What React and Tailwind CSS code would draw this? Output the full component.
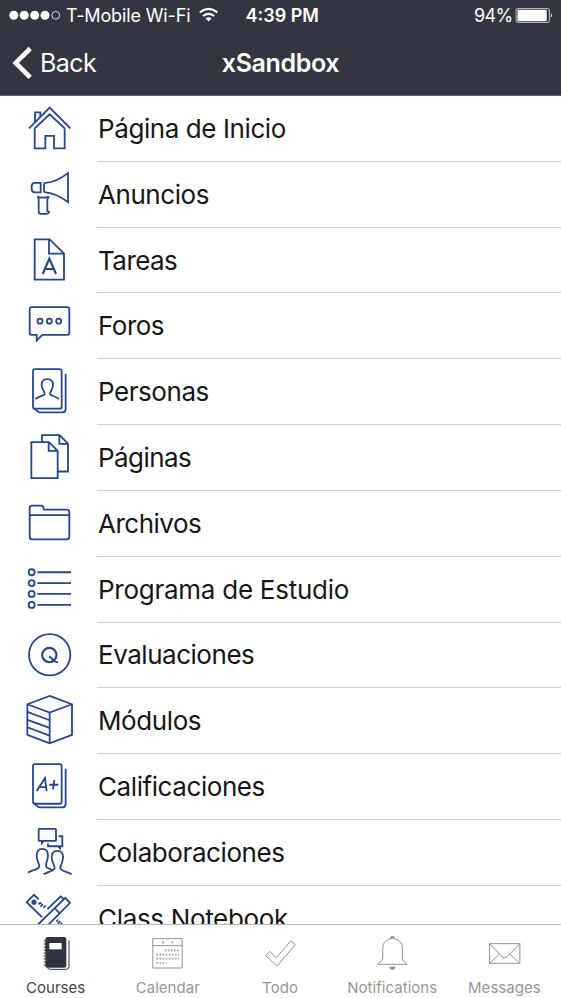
import React from "react";

const stroke = {
  fill: "none",
  stroke: "#25478f",
  strokeWidth: 5.4,
  strokeLinejoin: "miter",
};

const rows = [
  {
    label: "Página de Inicio",
    spacing: "tracking-[-0.41px]",
    box: "0 -0.9 291 197.5",
    icon: (
      <>
        <path d="M87 96 L149 34 L211 96" />
        <path d="M105 78 V48 H121 V61" />
        <path d="M104 96 L149 54 L194 96 V156 H162 V119 H136 V156 H104 Z" />
      </>
    ),
  },
  {
    label: "Anuncios",
    spacing: "tracking-[-0.45px]",
    box: "0 196.6 291 197.5",
    icon: (
      <>
        <path d="M122 259 V288 H105 Q95 288 95 278 V269 Q95 259 105 259 Z" />
        <path d="M132 263 Q132 259 137 259 C162 258 181 248 204 230 V317 C181 300 162 290 137 288 Q132 288 132 284 Z" />
        <path d="M112 300 C118 305 141 305 147 300 C144 304 142 307 142 312 V344 L147 346 Q146 352 138 352 H122 Q116 352 116 346 V309 Q116 303 112 300 Z" />
      </>
    ),
  },
  {
    label: "Tareas",
    spacing: "tracking-[-0.55px]",
    box: "0 -2 291 197.5",
    icon: (
      <>
        <path d="M104 32 H149 L192 75 V153 H104 Z M147 32 V75 H192" />
        <path d="M128 136 L148 90 L168 136 M134 121 H162" strokeWidth="6.5" />
      </>
    ),
  },
  {
    label: "Foros",
    spacing: "tracking-[-0.5px]",
    box: "0 195.5 291 197.5",
    icon: (
      <>
        <path d="M95 238 H202 Q208 238 208 244 V315 Q208 321 202 321 H127 L110 338 V321 H95 Q89 321 89 315 V244 Q89 238 95 238 Z" />
        <circle cx="120" cy="280" r="7.5" />
        <circle cx="148" cy="280" r="7.5" />
        <circle cx="176" cy="280" r="7.5" />
      </>
    ),
  },
  {
    label: "Personas",
    spacing: "tracking-[-0.45px]",
    box: "0 -3.1 291 197.5",
    icon: (
      <>
        <rect x="99" y="27" width="86" height="119" rx="6" />
        <path d="M102 145 L112 153 Q116 157 121 157 H187 Q197 157 197 147 V41" />
        <path d="M106 117 C114 109 127 109 134 103 C135 94 126 90 125 78 Q124 57 142 57 Q160 57 159 78 C158 90 149 94 150 103 C157 109 169 109 177 117" />
      </>
    ),
  },
  {
    label: "Páginas",
    spacing: "tracking-[-0.55px]",
    box: "0 194.4 291 197.5",
    icon: (
      <>
        <path d="M94 246 H147 L173 272 V354 H94 Z M146 246 V272 H173" />
        <path d="M126 246 V225 H179 L204 250 V334 H173 M178 225 V251 H204" />
      </>
    ),
  },
  {
    label: "Archivos",
    spacing: "tracking-[-0.5px]",
    box: "0 -4.1 291 197.5",
    icon: (
      <path d="M89 68 H208 M89 47 Q89 40 96 40 H123 Q130 40 131 48 L132 52 H201 Q208 52 208 60 V133 Q208 141 200 141 H97 Q89 141 89 133 Z" />
    ),
  },
  {
    label: "Programa de Estudio",
    spacing: "tracking-[-0.26px]",
    box: "0 193.3 291 197.5",
    icon: (
      <>
        <circle cx="95" cy="239" r="9" />
        <circle cx="95" cy="271.5" r="9" />
        <circle cx="95" cy="304" r="9" />
        <circle cx="95" cy="337" r="9" />
        <path d="M112 239 H213 M112 271.5 H213 M112 304 H213 M112 337 H213" />
      </>
    ),
  },
  {
    label: "Evaluaciones",
    spacing: "tracking-[-0.47px]",
    box: "0 -5.2 291 197.5",
    icon: (
      <>
        <circle cx="149" cy="90" r="62" />
        <circle cx="148" cy="91" r="21.5" strokeWidth="6.5" />
        <path d="M147 96 C157 95 158 115 174 112" strokeWidth="6" />
      </>
    ),
  },
  {
    label: "Módulos",
    spacing: "tracking-[-0.4px]",
    box: "0 192.2 291 197.5",
    icon: (
      <>
        <path d="M149 216 L216 241 V333 L149 358 L82 333 V241 Z M82 241 L149 266 L216 241 M149 266 V358" />
        <path d="M82 264 L149 289 M82 288 L149 312 M82 310 L149 335" />
      </>
    ),
  },
  {
    label: "Calificaciones",
    spacing: "tracking-[-0.42px]",
    box: "0 -6.3 291 197.5",
    icon: (
      <>
        <rect x="99" y="24" width="86" height="119" rx="6" />
        <path d="M102 142 L112 150 Q116 154 121 154 H187 Q197 154 197 144 V38" />
        <path d="M110 105 L135 66 L140 105 M118 93 H138 M148 86 H175 M163 72 L159 100" strokeWidth="5.5" />
      </>
    ),
  },
  {
    label: "Colaboraciones",
    spacing: "tracking-[-0.41px]",
    box: "0 191.2 291 197.5",
    icon: (
      <>
        <path d="M118 218 H166 Q168 218 168 220 V252 Q168 254 166 254 H131 L126 260 V254 H118 Q116 254 116 252 V220 Q116 218 118 218 Z" />
        <path d="M176 240 H187 V270 H180 V276 L174 270 H144 V262" />
        <path d="M84 349 C97 340 114 342 118 331 C118 320 109 313 110 298 Q111 278 127 278 Q144 278 144 298 C143 314 137 320 138 331 C142 338 151 337 158 342" />
        <path d="M131 354 C142 345 161 347 164 336 C164 325 155 317 155 302 Q156 284 172 284 Q189 284 189 302 C190 317 181 325 181 336 C185 347 203 345 215 354" />
      </>
    ),
  },
  {
    label: "Class Notebook",
    spacing: "tracking-[-0.33px]",
    box: "0 16.6 291 197.5",
    icon: (
      <>
        <path d="M126 110 L80 65 L102 43 L116 57" />
        <circle cx="102" cy="65" r="5" fill="#25478f" />
        <path d="M115 72 L120 66 M120 66 L124 70 M122 79 L128 71 M130 81 L137 76" />
        <path d="M142 86 L182 48 L190 55 M112 134 L196 52 L210 67 L144 134 M163 82 L178 97 M169 123 L174 117 M173 129 L181 122 M180 133 L186 127" />
      </>
    ),
  },
];

const tabs = [
  {
    label: "Courses",
    color: "text-[#434651]",
    icon: (
      <>
        <path d="M144 171 H192 Q199 171 199 178 V258 Q199 263 192 263 H142 Q136 263 136 257 V178 Q136 171 144 171 Z" fill="#2f3440" stroke="none" />
        <path d="M131 183 H140 M131 192 H140 M131 201 H140 M131 210 H140 M131 219 H140 M131 228 H140 M131 237 H140 M131 246 H140 M131 255 H140" stroke="#2f3440" />
        <path d="M141 262 Q144 268 151 268 H199 Q207 268 207 259 V181" stroke="#2f3440" />
        <rect x="148" y="189" width="37" height="19" fill="#fff" stroke="none" />
      </>
    ),
    box: "0 135 336.6 150",
  },
  {
    label: "Calendar",
    color: "text-[#979797]",
    icon: (
      <>
        <path d="M459 176 H547 V264 H459 Z M459 197 H547" />
        <path d="M487 187 H492 M515 187 H520" strokeWidth="5" />
        <path d="M495 211 H538 M470 224 H538 M470 236 H538 M470 249 H500" strokeWidth="5" strokeDasharray="4.5 4.8" />
      </>
    ),
    box: "336.6 135 336.6 150",
  },
  {
    label: "Todo",
    color: "text-[#979797]",
    icon: <path d="M798 227 L810 214 L830 233 L874 182 L887 194 L832 258 Z" />,
    box: "673.2 135 336.6 150",
  },
  {
    label: "Notifications",
    color: "text-[#979797]",
    icon: (
      <>
        <path d="M1132 253 Q1132 250 1138 247 Q1147 242 1147 234 V206 C1147 187 1159 176 1176 176 C1193 176 1206 187 1206 206 V234 Q1206 242 1214 247 Q1220 250 1220 253 Z" />
        <path d="M1170 174 Q1176 168 1182 174" strokeWidth="5" />
        <path d="M1167 260 H1186 Q1183 269 1176 269 Q1169 269 1167 260 Z" fill="#8e8e8e" stroke="none" />
      </>
    ),
    box: "1009.8 135 336.6 150",
  },
  {
    label: "Messages",
    color: "text-[#979797]",
    icon: (
      <>
        <path d="M1468 191 H1559 V250 H1468 Z" />
        <path d="M1468 191 L1505 230 Q1513 238 1521 230 L1559 191 M1468 250 L1498 222 M1559 250 L1529 222" />
      </>
    ),
    box: "1346.4 135 336.6 150",
  },
];

function StatusBar() {
  return (
    <div className="flex h-8 items-center text-[18px] leading-8">
      <svg className="h-8 w-[66px] shrink-0" viewBox="0 0 66 32" fill="#fff">
        <circle cx="13.8" cy="15.3" r="4.5" />
        <circle cx="24.2" cy="15.3" r="4.5" />
        <circle cx="34.7" cy="15.3" r="4.5" />
        <circle cx="45" cy="15.3" r="4.5" />
        <circle cx="55.8" cy="15.3" r="3.9" fill="none" stroke="#fff" strokeWidth="0.8" />
      </svg>
      <span className="w-[132px] whitespace-nowrap tracking-[-0.13px]">T-Mobile Wi-Fi</span>
      <svg className="h-8 w-[47.5px] shrink-0" viewBox="198 0 47.5 32" fill="none" stroke="#fff" strokeWidth="2.1">
        <path d="M199.8 12.3 Q208.6 5.5 217.4 12.3" />
        <path d="M203 16 Q208.6 11.7 214.2 16" />
        <path d="M205.5 18.2 Q208.6 16.3 211.7 18.2 L208.6 21.6 Z" fill="#fff" stroke="none" />
      </svg>
      <span className="w-[228.5px] whitespace-nowrap font-semibold">4:39 PM</span>
      <span className="w-[41px] whitespace-nowrap tracking-[-0.6px]">94%</span>
      <svg className="h-8 w-[46px] shrink-0" viewBox="515 0 46 32">
        <rect x="516.1" y="8.5" width="33.3" height="14" rx="2.5" fill="none" stroke="#b3b5bb" strokeWidth="1.1" />
        <rect x="517.5" y="9.7" width="29.2" height="11.5" rx="1" fill="#fff" />
        <path d="M550.8 13 Q553 15.4 550.8 17.8 Z" fill="#fff" />
      </svg>
    </div>
  );
}

export default function App() {
  return (
    <div className="flex h-[998px] w-[561px] flex-col overflow-hidden bg-white font-[Inter,'Liberation_Sans',sans-serif]">
      <header className="h-24 shrink-0 border-b border-[#5b5e68] bg-[#333640] text-white">
        <StatusBar />
        <div className="grid h-[63px] grid-cols-[1fr_auto_1fr] items-center">
          <div className="flex items-center">
            <svg className="h-[63px] w-[40px]" viewBox="0 32 40 63" fill="none" stroke="#fff" strokeWidth="4.6">
              <path d="M30.2 48.5 L15.7 62.9 L30.2 77.3" />
            </svg>
            <span className="text-[25px] tracking-[-0.6px]">Back</span>
          </div>
          <h1 className="text-[25px] font-semibold tracking-[-0.35px]">xSandbox</h1>
          <span />
        </div>
      </header>

      <main className="min-h-0 flex-1 overflow-hidden">
        <ul>
          {rows.map((row) => (
            <li key={row.label} className="flex h-[65.82px]">
              <svg className="h-[65.82px] w-[97px] shrink-0" viewBox={row.box} {...stroke}>
                {row.icon}
              </svg>
              <div className="flex flex-1 items-center border-b border-[#cfcfd1] pl-px">
                <span className={`whitespace-nowrap text-[26px] text-[#171717] ${row.spacing}`}>{row.label}</span>
              </div>
            </li>
          ))}
        </ul>
      </main>

      <nav className="flex h-[74px] shrink-0 border-t border-[#b8b8b8] bg-white">
        {tabs.map((tab) => (
          <div key={tab.label} className="flex flex-1 flex-col items-center">
            <svg className="h-[50px] w-full shrink-0" viewBox={tab.box} fill="none" stroke="#929292" strokeWidth="3">
              {tab.icon}
            </svg>
            <span className={`pr-px pt-px text-[15px] leading-6 tracking-[0.04px] ${tab.color}`}>{tab.label}</span>
          </div>
        ))}
      </nav>
    </div>
  );
}
